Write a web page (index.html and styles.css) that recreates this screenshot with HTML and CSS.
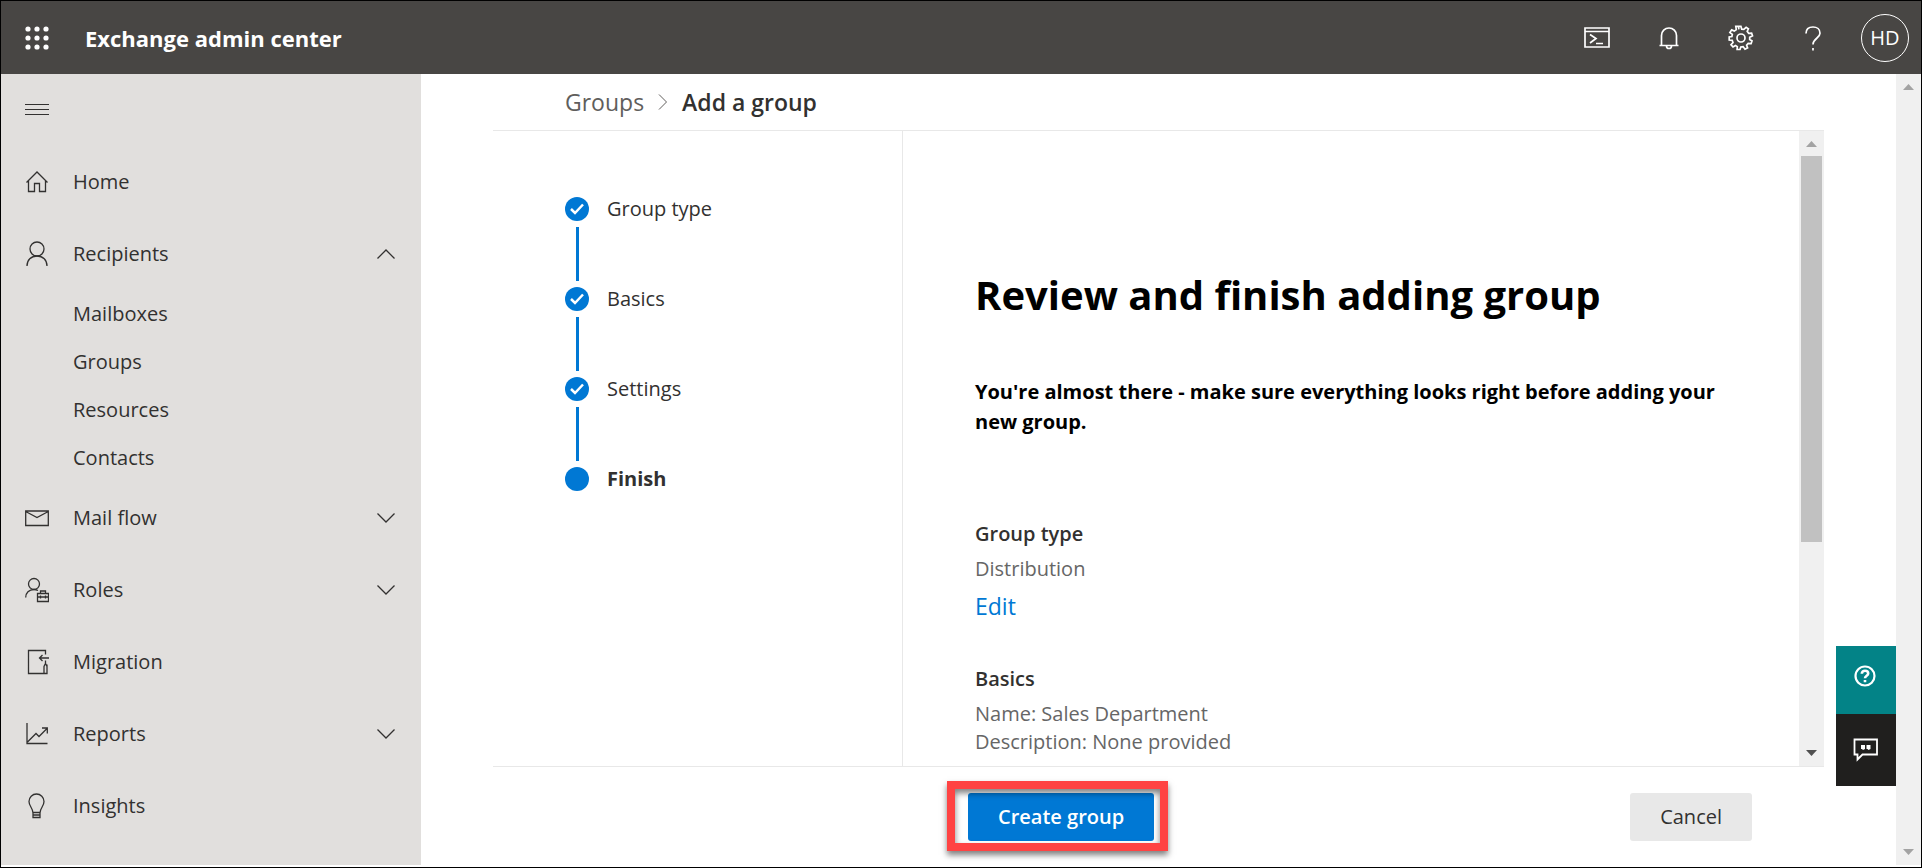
FILE: index.html
```html
<!DOCTYPE html>
<html lang="en">
<head>
<meta charset="utf-8">
<title>Exchange admin center</title>
<link rel="stylesheet" href="styles.css">
</head>
<body>
<div class="app">
  <header class="topbar">
    <button class="icon-btn launcher" aria-label="App launcher">
      <svg width="24" height="24" viewBox="0 0 24 24" fill="#fff"><circle cx="3" cy="3" r="2.6"/><circle cx="12" cy="3" r="2.6"/><circle cx="21" cy="3" r="2.6"/><circle cx="3" cy="12" r="2.6"/><circle cx="12" cy="12" r="2.6"/><circle cx="21" cy="12" r="2.6"/><circle cx="3" cy="21" r="2.6"/><circle cx="12" cy="21" r="2.6"/><circle cx="21" cy="21" r="2.6"/></svg>
    </button>
    <div class="brand">Exchange admin center</div>
    <div class="tools">
      <button class="icon-btn" aria-label="Shell">
        <svg class="line light" width="26" height="24" viewBox="0 0 26 24"><path d="M1 2h24v19H1zM1 5.5h24M6 8.500l6 4-6 4.500M12 17.500h7"/></svg>
      </button>
      <button class="icon-btn" aria-label="Notifications">
        <svg class="line light" width="24" height="24" viewBox="0 0 24 24"><path d="M4.500 19V9.500a7.500 7.500 0 0 1 15 0V19M2.500 19.500h19M9.500 20a2.500 2.500 0 0 0 5 0"/></svg>
      </button>
      <button class="icon-btn" aria-label="Settings">
        <svg class="line light" width="26" height="26" viewBox="0 0 26 26"><circle cx="13" cy="13" r="4"/><path d="M10.900 4.300 10.400 1.400H7.800L8.300 4.600 6.300 6.100 3.700 4.900 1.900 7.600 4.300 9.300 3.900 11.500 1.200 12V15L4.200 15.300 5 17.500 3 19.700 5 21.900 7.500 20.500 9.300 21.600 9.100 24.500H12L12.800 21.900 15.100 21.600 17 24.200 19.600 22.800 18.600 20.200 20.200 18.400 23.100 18.700 24 15.900 21.700 14.600 21.700 12.200 24.500 10.800 23.600 8.200 20.700 8.300 19.200 6.400 20.400 3.900 18.100 2.300 15.800 4.300 13.700 4.100 12.900 1.300H10.400"/></svg>
      </button>
      <button class="icon-btn" aria-label="Help">
        <svg class="line light" width="18" height="26" viewBox="0 0 18 26"><path d="M2 8.500C2 4 5 2 9 2s7 2.500 7 6.200c0 5-7 5.300-7 11.300M9 23v2.500"/></svg>
      </button>
      <button class="avatar" aria-label="Account">HD</button>
    </div>
  </header>

  <div class="body">
    <nav class="sidebar" aria-label="Main">
      <button class="nav-toggle" aria-label="Collapse navigation">
        <svg width="24" height="12" viewBox="0 0 24 12" fill="#323130"><path d="M0 0h24v1H0zM0 5h24v1H0zM0 10h24v1H0z"/></svg>
      </button>
      <ul class="nav">
        <li><a class="nav-item" href="#home">
          <svg class="line" width="24" height="24" viewBox="0 0 24 24"><path d="M1.500 12.500 12 2l10.500 10.500M3.500 11v10.500H9.500v-8h5v8h6V11"/></svg>
          <span>Home</span></a></li>
        <li><a class="nav-item" href="#recipients" aria-expanded="true">
          <svg class="line" width="24" height="26" viewBox="0 0 24 26"><circle cx="12" cy="8" r="7"/><path d="M2 25c0-6 4-10 10-10s10 4 10 10"/></svg>
          <span>Recipients</span>
          <svg class="line chev" width="18" height="10" viewBox="0 0 18 10"><path d="M.500 9.500 9 1l8.500 8.500"/></svg></a>
          <ul class="subnav">
            <li><a href="#mailboxes">Mailboxes</a></li>
            <li><a href="#groups">Groups</a></li>
            <li><a href="#resources">Resources</a></li>
            <li><a href="#contacts">Contacts</a></li>
          </ul></li>
        <li><a class="nav-item" href="#mailflow" aria-expanded="false">
          <svg class="line" width="24" height="18" viewBox="0 0 24 18"><path d="M.700 2h22.600v14.500H.700zM.700 2.500 12 8.500l11.300-6"/></svg>
          <span>Mail flow</span>
          <svg class="line chev" width="18" height="10" viewBox="0 0 18 10"><path d="M.500.500 9 9 17.500.500"/></svg></a></li>
        <li><a class="nav-item" href="#roles" aria-expanded="false">
          <svg class="line" width="24" height="26" viewBox="0 0 24 26"><circle cx="9" cy="7" r="5.500"/><path d="M.700 20.500C.700 16 4 12.500 9 12.500c1.500 0 2.500.300 4 1M12.500 16.500h11v8h-11zM15.500 16.500v-2.500h5v2.500M12.500 20h11M15.500 18.500v3M20.500 18.500v3"/></svg>
          <span>Roles</span>
          <svg class="line chev" width="18" height="10" viewBox="0 0 18 10"><path d="M.500.500 9 9 17.500.500"/></svg></a></li>
        <li><a class="nav-item" href="#migration">
          <svg class="line" width="24" height="26" viewBox="0 0 24 26"><path d="M20.500 5.500V1.500h-17v23h18.500v-9M24 9h-9.500M17.500 6l-3 3 3 3M20.500 11.500v3M19 24.500v-7l1.500-3 1.500 3v7"/></svg>
          <span>Migration</span></a></li>
        <li><a class="nav-item" href="#reports" aria-expanded="false">
          <svg class="line" width="24" height="24" viewBox="0 0 24 24"><path d="M2 1v20.500h20.500M2.500 20l8.500-8.500 3 3L22 6.500M17 6h5.300v5.500"/></svg>
          <span>Reports</span>
          <svg class="line chev" width="18" height="10" viewBox="0 0 18 10"><path d="M.500.500 9 9 17.500.500"/></svg></a></li>
        <li><a class="nav-item" href="#insights">
          <svg class="line" width="24" height="26" viewBox="0 0 24 26"><path d="M8 20c0-5-4-6.500-4-11.500a7.500 7.500 0 0 1 15 0C19 13.500 15 15 15 20M8 19.500h7v5H8zM8 22h7"/></svg>
          <span>Insights</span></a></li>
      </ul>
    </nav>

    <main class="main">
      <div class="crumbs">
        <a href="#groups">Groups</a>
        <svg class="line crumb-sep" width="10" height="16" viewBox="0 0 10 16"><path d="M1 .500 8.500 8 1 15.500"/></svg>
        <span class="current">Add a group</span>
      </div>
      <div class="wizard">
        <ol class="steps">
          <li><svg class="dot" width="24" height="24" viewBox="0 0 24 24"><circle cx="12" cy="12" r="12"/><path d="m6 12 4 4 8-8.500"/></svg><span>Group type</span></li>
          <li><svg class="dot" width="24" height="24" viewBox="0 0 24 24"><circle cx="12" cy="12" r="12"/><path d="m6 12 4 4 8-8.500"/></svg><span>Basics</span></li>
          <li><svg class="dot" width="24" height="24" viewBox="0 0 24 24"><circle cx="12" cy="12" r="12"/><path d="m6 12 4 4 8-8.500"/></svg><span>Settings</span></li>
          <li class="active" aria-current="step"><svg class="dot" width="24" height="24" viewBox="0 0 24 24"><circle cx="12" cy="12" r="12"/></svg><span>Finish</span></li>
        </ol>
        <section class="review">
          <h1>Review and finish adding group</h1>
          <p class="lead">You're almost there - make sure everything looks right before adding your new group.</p>
          <h2>Group type</h2>
          <p class="value">Distribution</p>
          <a class="edit" href="#edit">Edit</a>
          <h2>Basics</h2>
          <p class="value">Name: Sales Department<br>Description: None provided</p>
        </section>
        <div class="scrollbar inner" aria-hidden="true">
          <svg width="11" height="6" viewBox="0 0 11 6" fill="#a3a3a3"><path d="M0 6 5.500 0 11 6z"/></svg>
          <div class="track"><div class="thumb"></div></div>
          <svg width="11" height="6" viewBox="0 0 11 6" fill="#505050"><path d="M0 0h11L5.500 6z"/></svg>
        </div>
      </div>
      <div class="footer">
        <div class="highlight"><button class="btn primary">Create group</button></div>
        <button class="btn">Cancel</button>
      </div>
      <div class="side-tabs">
        <button class="tab help" aria-label="Help">
          <svg width="22" height="22" viewBox="0 0 22 22" fill="none" stroke="#fff" stroke-width="2.200"><circle cx="11" cy="11" r="9.500"/><path d="M7.800 8.800c0-2 1.400-3 3.200-3s3.200 1.100 3.200 2.700c0 2.300-3.200 2.300-3.200 4.800M11 15v2.200" stroke-width="2.600"/></svg>
        </button>
        <button class="tab feedback" aria-label="Feedback">
          <svg width="26" height="24" viewBox="0 0 26 24"><path d="M1.500 1.500h22.500v15H9.500L4.500 21.500v-5h-3z" fill="none" stroke="#fff" stroke-width="1.800"/><path d="M8 7h4v4l-2 1-1-1H8zM13.500 7h4v4l-2 1-1-1h-1z" fill="#fff"/></svg>
        </button>
      </div>
    </main>
    <div class="scrollbar outer" aria-hidden="true">
      <svg width="11" height="6" viewBox="0 0 11 6" fill="#a3a3a3"><path d="M0 6 5.500 0 11 6z"/></svg>
      <div class="track"></div>
      <svg width="11" height="6" viewBox="0 0 11 6" fill="#a3a3a3"><path d="M0 0h11L5.500 6z"/></svg>
    </div>
  </div>
</div>
</body>
</html>
```
FILE: styles.css
```css
* {
  box-sizing: border-box;
}

body {
  margin: 0;
  background: #fff;
  color: #323130;
  font-family: "Open Sans", "Noto Sans", sans-serif;
  font-size: 20px;
  line-height: 28px;
}

a {
  color: inherit;
  text-decoration: none;
}

button {
  margin: 0;
  padding: 0;
  border: 0;
  background: none;
  color: inherit;
  font: inherit;
  cursor: pointer;
}

ul,
ol {
  margin: 0;
  padding: 0;
  list-style: none;
}

svg {
  display: block;
  flex: none;
}

.line {
  fill: none;
  stroke: #323130;
  stroke-width: 1.3;
}

.light {
  stroke: #fff;
  stroke-width: 1.7;
}

.app {
  display: flex;
  flex-direction: column;
  height: 100vh;
  overflow: hidden;
  border: 1px solid #000;
}

.topbar {
  display: flex;
  align-items: center;
  flex: none;
  height: 73px;
  padding-right: 12px;
  background: #484644;
  color: #fff;
}

.icon-btn {
  display: flex;
  align-items: center;
  justify-content: center;
  width: 72px;
  height: 72px;
}

.launcher {
  margin-right: 12px;
}

.brand {
  flex: 1;
  font-size: 22px;
  font-weight: 700;
}

.tools {
  display: flex;
  align-items: center;
}

.avatar {
  width: 48px;
  height: 48px;
  margin-left: 12px;
  border: 1px solid #fff;
  border-radius: 50%;
  font-size: 20px;
}

.body {
  display: flex;
  flex: 1;
  min-height: 0;
  padding-bottom: 2px;
}

.sidebar {
  flex: none;
  width: 420px;
  overflow: hidden;
  background: #e1dfdd;
}

.nav-toggle {
  display: flex;
  align-items: center;
  height: 72px;
  padding-left: 24px;
}

.nav-item {
  display: flex;
  align-items: center;
  gap: 24px;
  height: 72px;
  padding: 0 26px 0 24px;
}

.chev {
  margin-left: auto;
}

.subnav a {
  display: flex;
  align-items: center;
  height: 48px;
  padding-left: 72px;
}

.main {
  position: relative;
  display: flex;
  flex: 1;
  flex-direction: column;
  min-width: 0;
  padding: 0 72px;
}

.crumbs {
  display: flex;
  align-items: center;
  flex: none;
  height: 56px;
  padding-left: 72px;
  font-size: 23px;
}

.crumbs a {
  color: #605e5c;
}

.crumb-sep {
  margin: 0 14px;
  stroke: #605e5c;
  stroke-width: 1;
}

.current {
  font-weight: 600;
}

.wizard {
  display: flex;
  flex: 1;
  min-height: 0;
  border: solid #e8e8e8;
  border-width: 1px 0;
}

.steps {
  display: flex;
  flex: none;
  flex-direction: column;
  gap: 66px;
  width: 410px;
  padding: 66px 0 0 72px;
  border-right: 1px solid #e8e8e8;
}

.steps li {
  position: relative;
  display: flex;
  align-items: center;
  gap: 18px;
  height: 24px;
}

.steps li:not(:last-child)::after {
  content: "";
  position: absolute;
  top: 30px;
  left: 11px;
  width: 3px;
  height: 54px;
  background: #0078d4;
}

.steps .active {
  font-weight: 700;
}

.dot {
  fill: #0078d4;
  stroke-width: 2.5;
}

.dot path {
  fill: none;
  stroke: #fff;
}

.review {
  flex: 1;
  min-width: 0;
  padding: 136px 72px 0;
  overflow: hidden;
}

h1,
h2,
p {
  margin: 0;
}

h1 {
  color: #000;
  font-size: 40px;
  font-weight: 700;
  line-height: 56px;
}

.lead {
  margin: 54px 0 83px;
  color: #000;
  font-weight: 700;
  line-height: 30px;
}

h2 {
  font-size: 20px;
  font-weight: 600;
  line-height: 28px;
}

.value {
  margin-top: 7px;
  color: #666;
}

.edit {
  display: block;
  width: max-content;
  margin: 7px 0 43px;
  color: #0078d4;
  font-size: 23px;
  line-height: 32px;
}

.footer {
  display: flex;
  align-items: flex-start;
  justify-content: space-between;
  flex: none;
  height: 98px;
  padding: 26px 72px 0 475px;
}

.highlight {
  position: relative;
}

.highlight::after {
  content: "";
  position: absolute;
  inset: -12px -14px -10px -21px;
  border: 8px solid #ff4343;
  box-shadow: 0 4px 6px rgba(0, 0, 0, .5), inset 0 4px 6px rgba(0, 0, 0, .5);
  pointer-events: none;
}

.btn {
  height: 48px;
  padding: 0 30px;
  border-radius: 3px;
  background: #e8e8e8;
  font-weight: 500;
}

.primary {
  background: #0078d4;
  color: #fff;
  font-weight: 600;
}

.side-tabs {
  position: absolute;
  right: 0;
  bottom: 79px;
  width: 60px;
}

.tab {
  display: flex;
  align-items: center;
  justify-content: center;
  width: 100%;
}

.help {
  height: 68px;
  padding: 0 2px 8px 0;
  background: #038387;
}

.feedback {
  height: 72px;
  background: #201f1e;
}

.scrollbar {
  display: flex;
  flex: none;
  flex-direction: column;
  align-items: center;
  width: 25px;
  padding: 10px 2px;
  background: #f0f0f0;
}

.track {
  flex: 1;
  align-self: stretch;
  margin: 9px 0;
}

.thumb {
  height: 66%;
  background: #c1c1c1;
}
```
